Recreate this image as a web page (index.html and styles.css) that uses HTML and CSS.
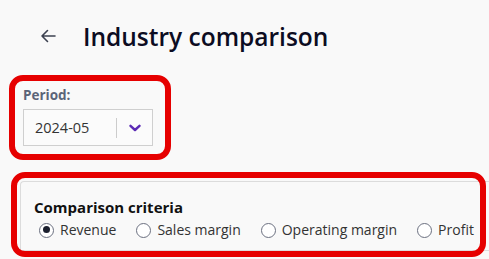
FILE: index.html
```html
<!DOCTYPE html>
<html>
<head>
<meta charset="utf-8">
<link rel="stylesheet" href="styles.css">
</head>
<body>
<div class="page">
  <header class="header">
    <svg class="back" width="16" height="14" viewBox="0 0 16 14"><path d="M15 7H2M7.5 1.5L2 7l5.5 5.5" fill="none" stroke="#3c4150" stroke-width="1.6" stroke-linecap="round" stroke-linejoin="round"/></svg>
    <h1 class="title">Industry comparison</h1>
  </header>
  <section class="period">
    <label class="period-label">Period:</label>
    <div class="select">
      <span class="select-value">2024-05</span>
      <span class="select-sep"></span>
      <svg class="chev" width="12" height="8" viewBox="0 0 12 8"><path d="M1.5 1.8L6 6l4.5-4.2" fill="none" stroke="#5b2bb5" stroke-width="2.4" stroke-linecap="round" stroke-linejoin="round"/></svg>
    </div>
  </section>
  <section class="card">
    <h2 class="card-title">Comparison criteria</h2>
    <div class="radios">
      <label class="radio"><span class="dot checked"></span>Revenue</label>
      <label class="radio"><span class="dot"></span>Sales margin</label>
      <label class="radio"><span class="dot"></span>Operating margin</label>
      <label class="radio"><span class="dot"></span>Profit</label>
    </div>
  </section>
  <div class="hl hl-period"></div>
  <div class="hl hl-criteria"></div>
</div>
</body>
</html>
```
FILE: styles.css
```css
html, body {
  margin: 0;
  padding: 0;
  background: #f9f9f9;
  font-family: "Open Sans", "Noto Sans", sans-serif;
}
.page {
  position: relative;
  width: 489px;
  height: 259px;
  overflow: hidden;
}
.header {
  display: flex;
  align-items: center;
  height: 36px;
  padding: 18px 0 0 40px;
}
.back {
  display: block;
  margin-right: 27px;
}
.title {
  margin: 0;
  font-size: 24.5px;
  font-weight: 600;
  color: #0c0c22;
  letter-spacing: 0;
}
.period {
  margin: 32px 0 0 23px;
}
.period-label {
  display: block;
  font-size: 13.5px;
  font-weight: 700;
  color: #5b6478;
  line-height: 18px;
}
.select {
  display: flex;
  align-items: center;
  width: 128px;
  height: 35px;
  margin-top: 5px;
  border: 1px solid #cfcfcf;
  background: #fbfbfb;
}
.select-value {
  padding-left: 11px;
  font-size: 14.5px;
  color: #333;
  width: 81px;
}
.select-sep {
  width: 1px;
  height: 20px;
  background: #cccccc;
}
.chev {
  margin-left: 12px;
}
.card {
  margin: 35px 0 0 20px;
  border: 1px solid #dcdcdc;
  border-right: none;
  border-radius: 4px 0 0 0;
  padding: 15px 0 10px 13px;
  background: #f9f9f9;
}
.card-title {
  margin: 0;
  font-size: 15px;
  font-weight: 700;
  color: #111;
  line-height: 20px;
}
.radios {
  display: flex;
  gap: 20px;
  margin-top: 3px;
  padding-left: 5px;
}
.radio {
  display: flex;
  align-items: center;
  font-size: 14px;
  color: #333;
  line-height: 20px;
}
.dot {
  box-sizing: border-box;
  width: 15px;
  height: 15px;
  border: 1.5px solid #6b7080;
  border-radius: 50%;
  margin-right: 6px;
  background: #fff;
  position: relative;
}
.dot.checked::after {
  content: "";
  position: absolute;
  left: 2.5px;
  top: 2.5px;
  width: 7px;
  height: 7px;
  border-radius: 50%;
  background: #1b1f2e;
}
.hl {
  position: absolute;
  box-sizing: border-box;
  border: 6px solid #e60000;
  border-radius: 14px;
}
.hl-period {
  left: 9px;
  top: 75px;
  width: 162px;
  height: 85px;
}
.hl-criteria {
  left: 11px;
  top: 172px;
  width: 475px;
  height: 85px;
}
```
